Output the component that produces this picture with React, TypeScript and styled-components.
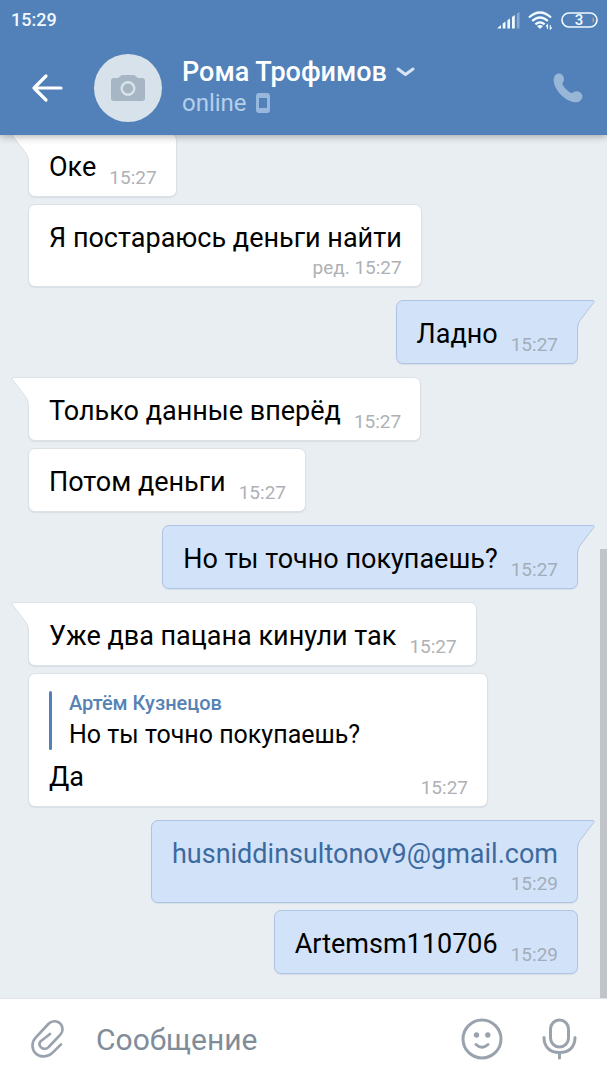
import React from "react";
import styled, { createGlobalStyle, css } from "styled-components";

const GlobalStyle = createGlobalStyle`
  * { box-sizing: border-box; }
  body { margin: 0; font-family: Roboto, "Noto Sans", sans-serif; }
`;

const Screen = styled.div`
  display: flex;
  flex-direction: column;
  height: 100vh;
  overflow: hidden;
  background: #e9eef3;
`;

const Top = styled.header`
  position: relative;
  z-index: 2;
  background: #5181b8;
  color: #fff;
  box-shadow: 0 1px 8px rgba(0, 0, 0, 0.35);
`;

const StatusBar = styled.div`
  display: flex;
  align-items: center;
  justify-content: space-between;
  height: 40px;
  padding: 0 9px 0 11px;
`;

const Clock = styled.time`
  font-size: 18px;
  line-height: 24px;
  font-weight: 500;
  color: #eff8ff;
`;

const StatusIcons = styled.div`
  display: flex;
  align-items: center;
  gap: 8px;
`;

const TitleBar = styled.div`
  display: flex;
  align-items: center;
  height: 95px;
  padding: 0 24px 0 30px;
`;

const IconButton = styled.button`
  display: flex;
  flex: none;
  padding: 0;
  border: 0;
  background: none;
  color: inherit;
  cursor: pointer;
`;

const Avatar = styled.div`
  display: flex;
  flex: none;
  align-items: center;
  justify-content: center;
  width: 68px;
  height: 68px;
  margin: 0 20px 0 30px;
  border-radius: 50%;
  background: #d8e2eb;
`;

const Peer = styled.div`
  flex: 1;
  min-width: 0;
  padding-bottom: 2px;
`;

const PeerName = styled.h1`
  display: flex;
  align-items: center;
  gap: 9px;
  margin: 0;
  font-size: 27px;
  line-height: 32px;
  font-weight: 500;
`;

const PeerStatus = styled.div`
  display: flex;
  align-items: center;
  gap: 9px;
  font-size: 24px;
  line-height: 30px;
  color: #b5cfeb;
`;

const Chat = styled.main`
  position: relative;
  display: flex;
  flex: 1;
  flex-direction: column;
  justify-content: flex-end;
  min-height: 0;
  overflow: hidden;
  padding: 0 29px 24px 28px;
`;

const ScrollThumb = styled.div`
  position: absolute;
  right: 0;
  bottom: 0;
  width: 7px;
  height: 52%;
  background: #c1c5c9;
`;

const Group = styled.section<{ $own?: boolean }>`
  display: flex;
  flex: none;
  flex-direction: column;
  align-items: ${(p) => (p.$own ? "flex-end" : "flex-start")};
  gap: 7px;
  margin-top: 13px;
`;

const Bubble = styled.article<{ $own?: boolean }>`
  position: relative;
  max-width: 100%;
  padding: 17px 19px 8px 20px;
  border: 1px solid ${(p) => (p.$own ? "#adc5e2" : "#dce1e6")};
  border-radius: 7px;
  background: ${(p) => (p.$own ? "#d2e3f9" : "#fff")};
  box-shadow: 0 1px 1px rgba(60, 90, 120, 0.1);
  color: #000;
  time {
    color: ${(p) => (p.$own ? "#a2adba" : "#aeb1b5")};
  }
`;

const Line = styled.div<{ $stacked?: boolean }>`
  display: flex;
  align-items: flex-end;
  justify-content: space-between;
  column-gap: 13px;
  ${(p) =>
    p.$stacked &&
    css`
      flex-direction: column;
    `}
`;

const Text = styled.p<{ $stacked?: boolean }>`
  margin: 0 0 ${(p) => (p.$stacked ? 4 : 5)}px;
  font-size: 27px;
  line-height: 32px;
`;

const MailLink = styled.a`
  color: #3d6a9e;
  text-decoration: none;
`;

const Stamp = styled.time`
  flex: none;
  font-size: 19px;
  line-height: 20px;
`;

const Quote = styled.blockquote`
  position: relative;
  min-width: 419px;
  margin: 0 0 11px;
  padding-left: 20px;
  &::before {
    content: "";
    position: absolute;
    inset: 0 auto 0 0;
    width: 3px;
    border-radius: 2px;
    background: #5181b8;
  }
`;

const QuoteAuthor = styled.cite`
  display: block;
  font-size: 20px;
  line-height: 24px;
  font-style: normal;
  font-weight: 500;
  color: #5682b4;
`;

const QuoteText = styled.p`
  margin: 0;
  padding-top: 5px;
  font-size: 25px;
  line-height: 30px;
`;

const TailSvg = styled.svg<{ $own?: boolean }>`
  position: absolute;
  top: -1px;
  ${(p) => (p.$own ? "right: -18px; transform: scaleX(-1);" : "left: -18px;")}
`;

const Composer = styled.form`
  display: flex;
  flex: none;
  align-items: center;
  height: 82px;
  padding: 0 30px 2px;
  border-top: 1px solid #dfe3e7;
  background: #fff;
  color: #99a2ad;
`;

const MessageInput = styled.input`
  flex: 1;
  min-width: 0;
  margin: 0 20px 0 30px;
  padding: 3px 0 0;
  border: 0;
  outline: 0;
  font: 30px/36px Roboto, "Noto Sans", sans-serif;
  color: #000;
  &::placeholder {
    color: #818c99;
    opacity: 1;
  }
`;

const Actions = styled.div`
  display: flex;
  align-items: center;
  gap: 38px;
`;

function Tail({ own }: { own?: boolean }) {
  return (
    <TailSvg $own={own} width="26" height="30" viewBox="0 0 26 30" aria-hidden="true">
      <path d="M26 1H2.5Q.8 1 1.8 2.6L15 20Q17.5 23 17.5 29H26Z" fill={own ? "#d2e3f9" : "#fff"} />
      <path
        d="M26 .5H2Q.2 .7 1.3 2.6L15 20.4Q17.5 23.5 17.5 29"
        fill="none"
        stroke={own ? "#adc5e2" : "#dce1e6"}
      />
    </TailSvg>
  );
}

type MessageProps = {
  time: string;
  own?: boolean;
  tail?: boolean;
  stacked?: boolean;
  quote?: { author: string; text: string };
  children: React.ReactNode;
};

function Message({ time, own, tail, stacked, quote, children }: MessageProps) {
  return (
    <Bubble $own={own}>
      {tail && <Tail own={own} />}
      {quote && (
        <Quote>
          <QuoteAuthor>{quote.author}</QuoteAuthor>
          <QuoteText>{quote.text}</QuoteText>
        </Quote>
      )}
      <Line $stacked={stacked}>
        <Text $stacked={stacked}>{children}</Text>
        <Stamp>{time}</Stamp>
      </Line>
    </Bubble>
  );
}

function SignalIcon() {
  return (
    <svg width="23" height="17" viewBox="0 0 23 17" fill="#f1faff" aria-hidden="true">
      <path d="M0 16.500L4 13V16.500ZM5.700 11.600L8.500 9.600V16.500H5.700ZM10.400 8.200L13 6.400V16.500H10.400ZM15 5L17.800 3V16.500H15Z" />
      <path d="M19.800 1.700L22.500 0V16.500H19.800Z" opacity=".35" />
    </svg>
  );
}

function WifiIcon() {
  return (
    <svg width="25" height="19" viewBox="0 0 25 19" fill="none" stroke="#f1faff" strokeWidth="2.3" aria-hidden="true">
      <path d="M1 6.5Q12 -3.5 23 6.5M4.2 10Q12 3 19.8 10M7.4 13.4Q12 9.3 16.6 13.4" />
      <path d="M9 15Q12 13 15 15L12 18Z" fill="#f1faff" stroke="none" />
      <path d="M19.5 18v-4l-1.4 1.5M22.3 14v4l1.4-1.5" strokeWidth="1.1" />
    </svg>
  );
}

function BatteryIcon() {
  return (
    <svg width="37" height="16" viewBox="0 0 37 16" aria-hidden="true">
      <rect x="1" y="1" width="35" height="14" rx="7" fill="none" stroke="#f1faff" strokeWidth="1.6" />
      <path d="M31.5 5v6q1.800-1 1.800-3t-1.800-3z" fill="#b3a384" />
      <text x="18" y="13" textAnchor="middle" fontSize="15" fontWeight="500" fill="#f1faff">
        3
      </text>
    </svg>
  );
}

export default function App() {
  return (
    <>
      <GlobalStyle />
      <Screen>
        <Top>
          <StatusBar>
            <Clock>15:29</Clock>
            <StatusIcons>
              <SignalIcon />
              <WifiIcon />
              <BatteryIcon />
            </StatusIcons>
          </StatusBar>
          <TitleBar>
            <IconButton type="button" aria-label="Назад">
              <svg width="34" height="30" viewBox="0 0 34 30" fill="none" stroke="currentColor" strokeWidth="3.200" strokeLinecap="round" strokeLinejoin="round">
                <path d="M31 15H4M16 3L4 15L16 27" />
              </svg>
            </IconButton>
            <Avatar>
              <svg width="34" height="26" viewBox="0 0 34 26" aria-hidden="true">
                <path d="M3 3H7L9.500 .8Q10.300 0 11.500 0H22.500Q23.700 0 24.500 .8L27 3H31Q34 3 34 6V23Q34 26 31 26H3Q0 26 0 23V6Q0 3 3 3Z" fill="#a6b6c5" />
                <circle cx="17" cy="13.500" r="6.300" fill="none" stroke="#d8e2eb" strokeWidth="2.400" />
              </svg>
            </Avatar>
            <Peer>
              <PeerName>
                Рома Трофимов
                <svg width="19" height="10" viewBox="0 0 19 10" fill="none" stroke="#d6e4f3" strokeWidth="3" strokeLinecap="round" strokeLinejoin="round" aria-hidden="true">
                  <path d="M2 2L9.500 7.500L17 2" />
                </svg>
              </PeerName>
              <PeerStatus>
                online
                <svg width="14" height="20" viewBox="0 0 14 20" aria-hidden="true">
                  <path fillRule="evenodd" d="M3 0H11Q14 0 14 3V17Q14 20 11 20H3Q0 20 0 17V3Q0 0 3 0ZM3 5V15H11V5Z" fill="#97b8dc" />
                </svg>
              </PeerStatus>
            </Peer>
            <IconButton type="button" aria-label="Позвонить">
              <svg width="30" height="30" viewBox="0 0 30 30" fill="#97b6d8">
                <path d="M5.500 .5C8.500 .2 11 3 11 6.200C11 8.500 9.300 9.500 9.500 11C10 13.500 15.500 19.500 18.500 20C20.200 20.300 21 18.300 23.500 18.300C26.800 18.300 29.700 21 29.400 24C29 27.200 25.800 29.500 22 29.300C12.500 28.500 1.500 17.500 .7 8C.3 4.200 2.300 .9 5.500 .5Z" />
              </svg>
            </IconButton>
          </TitleBar>
        </Top>

        <Chat>
          <Group>
            <Message time="15:27" tail>Оке</Message>
            <Message time="ред. 15:27" stacked>Я постараюсь деньги найти</Message>
          </Group>
          <Group $own>
            <Message time="15:27" own tail>Ладно</Message>
          </Group>
          <Group>
            <Message time="15:27" tail>Только данные вперёд</Message>
            <Message time="15:27">Потом деньги</Message>
          </Group>
          <Group $own>
            <Message time="15:27" own tail>Но ты точно покупаешь?</Message>
          </Group>
          <Group>
            <Message time="15:27" tail>Уже два пацана кинули так</Message>
            <Message time="15:27" quote={{ author: "Артём Кузнецов", text: "Но ты точно покупаешь?" }}>
              Да
            </Message>
          </Group>
          <Group $own>
            <Message time="15:29" own tail stacked>
              <MailLink href="mailto:husniddinsultonov9@gmail.com">husniddinsultonov9@gmail.com</MailLink>
            </Message>
            <Message time="15:29" own>Artemsm110706</Message>
          </Group>
          <ScrollThumb />
        </Chat>

        <Composer onSubmit={(e) => e.preventDefault()}>
          <IconButton type="button" aria-label="Прикрепить">
            <svg width="36" height="40" viewBox="90 87 108 120" fill="none" stroke="currentColor" strokeWidth="8" strokeLinecap="round" strokeLinejoin="round">
              <path d="M183 163L158 188C144 202 121 203 108 191C94 178 94 157 107 143L145 102C154 92 170 91 180 100C190 109 190 124 181 134L146 171C140 178 129 178 123 172C117 166 117 159 123 153L150 132" />
            </svg>
          </IconButton>
          <MessageInput type="text" placeholder="Сообщение" aria-label="Сообщение" />
          <Actions>
            <IconButton type="button" aria-label="Смайлики">
              <svg width="42" height="42" viewBox="0 0 42 42" fill="none" stroke="currentColor" strokeWidth="3" strokeLinecap="round">
                <circle cx="21" cy="21" r="19" />
                <path d="M15 26.500Q21 32 27 26.500" />
                <circle cx="15.500" cy="17" r="2.700" fill="currentColor" stroke="none" />
                <circle cx="26.800" cy="17" r="2.700" fill="currentColor" stroke="none" />
              </svg>
            </IconButton>
            <IconButton type="button" aria-label="Голосовое сообщение">
              <svg width="36" height="42" viewBox="0 0 36 42" fill="none" stroke="currentColor" strokeWidth="3" strokeLinecap="round">
                <rect x="9.500" y="2" width="18" height="27" rx="9" />
                <path d="M3 19.500C3 29 9 34.500 18.500 34.500S34 29 34 19.500M18.500 34.500V40" />
              </svg>
            </IconButton>
          </Actions>
        </Composer>
      </Screen>
    </>
  );
}
